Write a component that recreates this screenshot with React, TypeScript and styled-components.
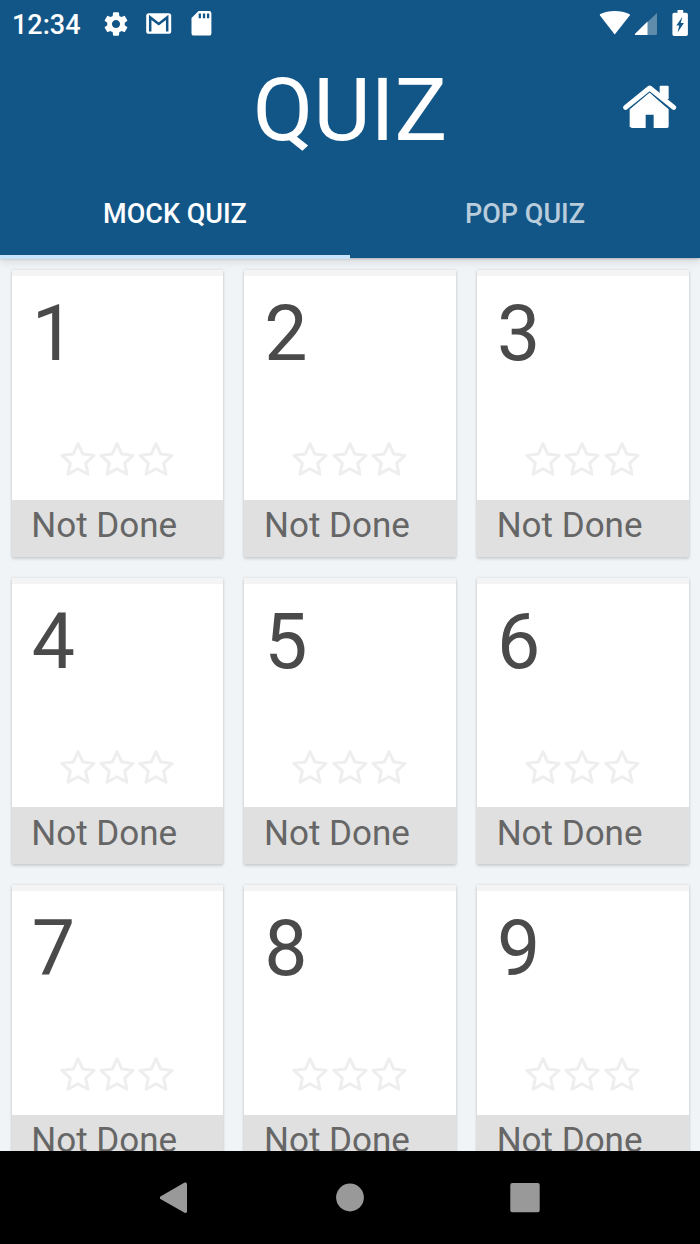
import React from "react";
import styled, { createGlobalStyle } from "styled-components";

const GlobalStyle = createGlobalStyle`
  * { box-sizing: border-box; }
  html, body { margin: 0; padding: 0; }
  body { font-family: Roboto, "Liberation Sans", sans-serif; overflow: hidden; }
  svg { display: block; }
`;

const Screen = styled.div`
  width: 700px;
  height: 1244px;
  display: flex;
  flex-direction: column;
  overflow: hidden;
  background: #f0f4f7;
`;

const Header = styled.header`
  height: 258px;
  flex: none;
  display: flex;
  flex-direction: column;
  background: #125688;
  color: #fff;
  box-shadow: 0 1px 2px rgba(0, 0, 0, 0.2), 0 3px 9px rgba(0, 0, 0, 0.12);
  z-index: 1;
`;

const StatusBar = styled.div`
  height: 48px;
  display: flex;
  align-items: center;
  padding: 0 8px 0 12px;
`;

const Clock = styled.span`
  width: 90px;
  padding-top: 2px;
  font-size: 27px;
  font-weight: 500;
  line-height: 46px;
`;

const Notifications = styled.div`
  display: flex;
  flex: 1;
`;

const TitleBar = styled.div`
  height: 124px;
  display: grid;
  grid-template-columns: 1fr auto 1fr;
`;

const Title = styled.h1`
  grid-column: 2;
  margin: 0;
  font-size: 88px;
  font-weight: 400;
  line-height: 124px;
`;

const HomeButton = styled.button`
  justify-self: end;
  align-self: start;
  margin: 35.5px 23.3px 0 0;
  padding: 0;
  border: 0;
  background: none;
`;

const Tabs = styled.nav`
  flex: 1;
  display: flex;
  margin-bottom: -1px;
`;

const Tab = styled.div<{ $active?: boolean }>`
  flex: 1;
  text-align: center;
  font-size: 27px;
  font-weight: 500;
  line-height: 82px;
  height: 87px;
  padding-top: 1px;
  color: ${(p) => (p.$active ? "#fff" : "#b8ccdb")};
  border-bottom: ${(p) => (p.$active ? "4.6px solid #c7e4fb" : "0")};
`;

const Content = styled.main`
  flex: 1;
  min-height: 0;
  overflow: hidden;
  padding: 12px 11.5px 0 11.5px;
  display: grid;
  grid-template-columns: repeat(3, 1fr);
  grid-auto-rows: 286.7px;
  gap: 21px;
`;

const Card = styled.article`
  display: flex;
  flex-direction: column;
  background: #fff;
  border-top: 6px solid #f4f4f4;
  box-shadow: 0 0 3px rgba(0, 0, 0, 0.11), 0 2px 3px rgba(0, 0, 0, 0.13);
`;

const CardNumber = styled.div`
  height: 160px;
  padding: 13px 0 0 20.2px;
  font-size: 77px;
  line-height: 90px;
  color: #4a4a4a;
`;

const Stars = styled.div`
  flex: 1;
  display: flex;
  justify-content: center;
  padding: 5px 0.6px 0 0;
  gap: 3.3px;
`;

const CardStatus = styled.div`
  height: 57px;
  padding: 0.4px 0 0 19.8px;
  background: #e0e0e0;
  color: #666;
  font-size: 35px;
  line-height: 51px;
`;

const NavBar = styled.footer`
  height: 93px;
  flex: none;
  display: flex;
  justify-content: center;
  align-items: center;
  gap: 145px;
  background: #000;
  z-index: 1;
`;

const NavItem = styled.div`
  width: 30px;
  height: 32px;
`;

const GearIcon = () => (
  <svg width="28" height="28" viewBox="0 0 24 24" fill="#fff">
    <path d="M19.43 12.98c.04-.32.07-.64.07-.98s-.03-.66-.07-.98l2.11-1.65c.19-.15.24-.42.12-.64l-2-3.46c-.12-.22-.39-.3-.61-.22l-2.49 1c-.52-.4-1.08-.73-1.69-.98l-.38-2.65C14.46 2.18 14.25 2 14 2h-4c-.25 0-.46.18-.49.42l-.38 2.65c-.61.25-1.17.59-1.69.98l-2.49-1c-.23-.09-.49 0-.61.22l-2 3.46c-.13.22-.07.49.12.64l2.11 1.65c-.04.32-.07.65-.07.98s.03.66.07.98l-2.11 1.65c-.19.15-.24.42-.12.64l2 3.46c.12.22.39.3.61.22l2.49-1c.52.4 1.08.73 1.69.98l.38 2.65c.03.24.24.42.49.42h4c.25 0 .46-.18.49-.42l.38-2.65c.61-.25 1.17-.59 1.69-.98l2.49 1c.23.09.49 0 .61-.22l2-3.46c.12-.22.07-.49-.12-.64l-2.11-1.65zM12 15.5c-1.93 0-3.5-1.57-3.5-3.5s1.57-3.5 3.5-3.5 3.5 1.57 3.5 3.5-1.57 3.5-3.5 3.5z" />
  </svg>
);

const MailIcon = () => (
  <svg width="61" height="28" viewBox="-11 0 61 28">
    <rect x="5.2" y="3.2" width="25" height="20.6" rx="2.6" fill="#fff" />
    <path d="M9.2 21.6V7.4L17.7 14 26.2 7.4V21.6" fill="none" stroke="#125688" strokeWidth="2.5" />
  </svg>
);

const SdIcon = () => (
  <svg width="22" height="28" viewBox="0 0 22 28">
    <path d="M7.6 1.1h10.6a2.2 2.2 0 0 1 2.2 2.2v20.1a2.2 2.2 0 0 1-2.2 2.2H2.7a2.2 2.2 0 0 1-2.2-2.2V8z" fill="#fff" />
    <path d="M8.8 3.6v4.6M13 3.6v4.6M17.1 3.6v4.6" stroke="#125688" strokeWidth="2.3" />
  </svg>
);

const SignalIcons = () => (
  <svg width="96" height="32" viewBox="596 8 96 32">
    <path d="M614.7 34.6 600 15.6q-.7-1 .4-1.6Q606.5 11 614.7 11T629.300 14q1.1.6.4 1.6z" fill="#fff" />
    <path d="M657 13v20.500q0 1.500-1.500 1.500H636q-2 0-.6-1.500z" fill="#608cac" />
    <path d="M647.500 21.500V35H636q-2 0-.6-1.500z" fill="#fff" />
    <path d="M677.500 10h5.700v2.700h2.900q1.800 0 1.800 1.800v19.700q0 1.800-1.800 1.800h-11.900q-1.800 0-1.800-1.800V14.500q0-1.800 1.800-1.800h3.300z" fill="#fff" />
    <path d="M682.500 16.800 676.300 25.600h2.900l-1.600 7 6.300-9.600h-3.200z" fill="#125688" />
  </svg>
);

const HomeIcon = () => (
  <svg width="55" height="45" viewBox="95 251 165 135" fill="#fff">
    <path d="M208 280V259q0-3 3-3h21q3 0 3 3v36l-12 4z" />
    <path d="M178 273 115 326v55q0 2 5 2h46v-40h24v40h40q6 0 6-5v-52z" stroke="#125688" strokeWidth="6" strokeLinejoin="round" />
    <path d="M120 327 178 279l57 48v51q0 5-5 5h-40v-40h-24v40h-41q-5 0-5-5z" />
    <path d="m106 321 72-58 72 58" fill="none" stroke="#fff" strokeWidth="15" strokeLinecap="round" strokeLinejoin="round" />
  </svg>
);

const starPoints = Array.from({ length: 10 }, (_, i) => {
  const radius = i % 2 ? 8.1 : 16.9;
  const angle = (Math.PI * i) / 5;
  return `${18 + radius * Math.sin(angle)},${19.6 - radius * Math.cos(angle)}`;
}).join(" ");

const Star = () => (
  <svg width="36" height="36" viewBox="0 0 36 36">
    <polygon points={starPoints} fill="none" stroke="#eee" strokeWidth="3" strokeLinejoin="round" />
  </svg>
);

const QuizCard = ({ number }: { number: number }) => (
  <Card>
    <CardNumber>{number}</CardNumber>
    <Stars>
      <Star />
      <Star />
      <Star />
    </Stars>
    <CardStatus>Not Done</CardStatus>
  </Card>
);

export default function App() {
  return (
    <>
      <GlobalStyle />
      <Screen>
        <Header>
          <StatusBar>
            <Clock>12:34</Clock>
            <Notifications>
              <GearIcon />
              <MailIcon />
              <SdIcon />
            </Notifications>
            <SignalIcons />
          </StatusBar>
          <TitleBar>
            <Title>QUIZ</Title>
            <HomeButton aria-label="Home">
              <HomeIcon />
            </HomeButton>
          </TitleBar>
          <Tabs>
            <Tab $active>MOCK QUIZ</Tab>
            <Tab>POP QUIZ</Tab>
          </Tabs>
        </Header>
        <Content>
          {[1, 2, 3, 4, 5, 6, 7, 8, 9].map((n) => (
            <QuizCard key={n} number={n} />
          ))}
        </Content>
        <NavBar>
          <NavItem>
            <svg width="30" height="32" viewBox="0 0 30 32">
              <path d="M-.3 15 24.6.6Q27 0 27 2v27.500q0 2-2.400 1.300L-.3 16.500q-1-.8 0-1.500z" fill="#999" overflow="visible" />
            </svg>
          </NavItem>
          <NavItem>
            <svg width="30" height="32" viewBox="0 0 30 32">
              <circle cx="15" cy="15.5" r="13.9" fill="#999" />
            </svg>
          </NavItem>
          <NavItem>
            <svg width="30" height="32" viewBox="0 0 30 32">
              <rect x=".3" y=".9" width="29.4" height="29.4" rx="2" fill="#999" />
            </svg>
          </NavItem>
        </NavBar>
      </Screen>
    </>
  );
}
